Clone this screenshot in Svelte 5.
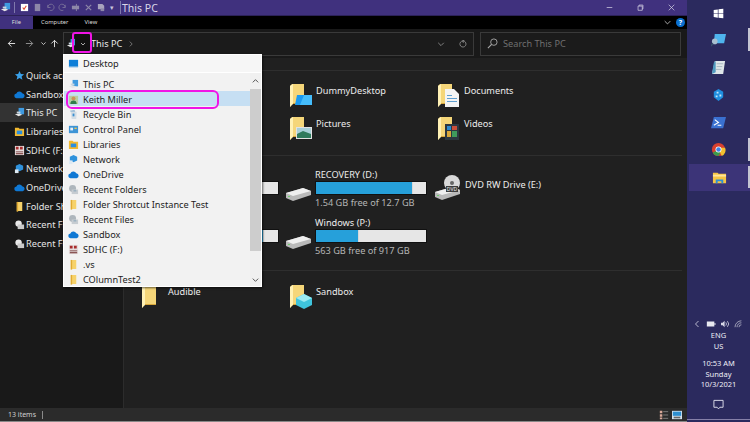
<script>
    const sideItems = [
        { label: "Quick access", icon: "star" },
        { label: "Sandbox", icon: "cloud" },
        { label: "This PC", icon: "pc", active: true },
        { label: "Libraries", icon: "lib" },
        { label: "SDHC (F:)", icon: "sd" },
        { label: "Network", icon: "net" },
        { label: "OneDrive", icon: "cloud" },
        { label: "Folder Shrotcut", icon: "smallfolder" },
        { label: "Recent Files", icon: "recent" },
        { label: "Recent Folders", icon: "recent" }
    ];

    const menuItems = [
        { label: "This PC", icon: "pc" },
        { label: "Keith Miller", icon: "user", active: true },
        { label: "Recycle Bin", icon: "bin" },
        { label: "Control Panel", icon: "panel" },
        { label: "Libraries", icon: "lib" },
        { label: "Network", icon: "net" },
        { label: "OneDrive", icon: "cloud" },
        { label: "Recent Folders", icon: "recentgrey" },
        { label: "Folder Shrotcut Instance Test", icon: "smallfolder" },
        { label: "Recent Files", icon: "recentgrey" },
        { label: "Sandbox", icon: "cloud" },
        { label: "SDHC (F:)", icon: "sd" },
        { label: ".vs", icon: "smallfolder" },
        { label: "COlumnTest2", icon: "smallfolder" }
    ];

    const folders = [
        { label: "Desktop", kind: "desk" },
        { label: "DummyDesktop", kind: "desk" },
        { label: "Documents", kind: "doc" },
        { label: "Downloads", kind: "plain" },
        { label: "Pictures", kind: "pic" },
        { label: "Videos", kind: "video" }
    ];

    const drives = [
        { label: "Local Disk (C:)", used: 56 },
        { label: "RECOVERY (D:)", free: "1.54 GB free of 12.7 GB", used: 88 },
        { label: "DVD RW Drive (E:)", dvd: true },
        { label: "Data (O:)", free: "120 GB free of 931 GB", used: 87 },
        { label: "Windows (P:)", free: "563 GB free of 917 GB", used: 39 }
    ];

    const pinned = [
        { icon: "search", running: true },
        { icon: "note" },
        { icon: "azure" },
        { icon: "shell" },
        { icon: "chrome", running: true },
        { icon: "explorer", running: true, current: true }
    ];
</script>

{#snippet small(name)}
    <svg class="small" viewBox="0 0 12 12">
        {#if name === "star"}
            <path d="M6 1l1.5 3.4 3.5.3-2.7 2.3.9 3.5L6 8.6 2.8 10.500l.9-3.500L1 4.700l3.500-.3z" fill="#3aa0e8" />
        {:else if name === "cloud"}
            <path d="M3 10a2.500 2.500 0 0 1-.4-5A3.500 3.500 0 0 1 9 4.500 2.800 2.800 0 0 1 9.500 10z" fill="#0f78d4" />
        {:else if name === "pc"}
            <path d="M5 1h6v7H5z" fill="#3f9ae0" />
            <path d="M1 8l5-1 3 1.500-4 1.500z" fill="#e6e6e6" />
            <path d="M3 5h4v2H3z" fill="#c9d6e0" />
        {:else if name === "lib"}
            <path d="M1 2h4l1 1h5v8H1z" fill="#f2b92f" />
            <path d="M3 5h6v4H3z" fill="#2b8fe0" />
        {:else if name === "sd"}
            <path d="M1 1h10v10H1z" fill="#e4dcdc" />
            <path d="M2 2h3v3H2zM6.500 2h3v3h-3z" fill="#a82c2c" />
            <path d="M2 7h8v1H2zM2 9h8v1H2z" fill="#6d2a2a" />
        {:else if name === "net"}
            <path d="M6 1l4 2v4L6 9 2 7V3z" fill="#2f92dc" />
            <path d="M1 7h4v4H1z" fill="#dce9f3" />
        {:else if name === "smallfolder"}
            <path d="M3 1h6v10H5l-2 .500z" fill="#f6d26a" />
            <path d="M3 1h1.500v10.500H3z" fill="#e0ab33" />
        {:else if name === "recent"}
            <circle cx="5" cy="5" r="3.500" fill="#e8e8e8" />
            <path d="M4 6h7v5H4z" fill="#c9c9c9" />
        {:else if name === "recentgrey"}
            <circle cx="5" cy="5" r="3.800" fill="#aeb6bc" />
            <path d="M4 6h7v5H4z" fill="#c6ccd1" />
            <path d="M6 7h3v1H6z" fill="#7f9fb5" />
        {:else if name === "user"}
            <path d="M1 2h10v9H1z" fill="#b9cfa0" />
            <circle cx="6" cy="5" r="2.200" fill="#c9965a" />
            <path d="M2.500 11c0-3 1.500-4 3.500-4s3.500 1 3.500 4z" fill="#2f7d4b" />
        {:else if name === "bin"}
            <path d="M3 3h6.500L9 11H4z" fill="#d3dde5" />
            <path d="M2 2l5-1 1 2H3z" fill="#8fb5d3" />
            <path d="M5 5l2 0 0 3-2 0z" fill="#3a8fd0" />
        {:else if name === "panel"}
            <path d="M1 2h10v8H1z" fill="#3d94d6" />
            <path d="M2.500 4h3v3h-3z" fill="#e7f0f6" />
            <path d="M7 4h2.500v1.500H7z" fill="#f1c64e" />
        {:else if name === "desktop"}
            <path d="M1 2h10v8H1z" fill="#0f7fd8" />
            <path d="M1 9h10v1H1z" fill="#7fb7e3" />
        {/if}
    </svg>
{/snippet}

{#snippet folder(kind)}
    <svg class="folder" viewBox="0 0 24 25">
        <path d="M1 3l2-2h12v19H3l-2 4z" fill="#f5d679" />
        <path d="M1 3l3-2v20l-3 3z" fill="#fff1b5" />
        <path d="M4 21h11v-1H4z" fill="#d6a63b" />
        {#if kind === "desk"}
            <path d="M8 12h15v10H6z" fill="#1a9af0" />
            <path d="M15 12h8v10h-12z" fill="#45bdfb" />
        {:else if kind === "doc"}
            <path d="M8 6h9l5 5v13H8z" fill="#f4f4f4" />
            <path d="M10 12h5v1h-5zM10 15h10v1H10zM10 18h10v1H10z" fill="#5f9fd0" />
        {:else if kind === "pic"}
            <path d="M7 11h16v12H7z" fill="#e2e2e2" />
            <path d="M8 12h14v10H8z" fill="#a8d0d8" />
            <path d="M8 18l6-3 8 3v4H8z" fill="#2f7a5c" />
        {:else if kind === "video"}
            <path d="M8 8h14v16H8z" fill="#2c3740" />
            <path d="M10 10h4v4h-4z" fill="#2c8ad0" />
            <path d="M15 10h5v4h-5z" fill="#c84e3a" />
            <path d="M10 15h4v6h-4z" fill="#d9a73a" />
            <path d="M15 15h5v6h-5z" fill="#3f9a5c" />
        {:else if kind === "box"}
            <path d="M15 10l8 4v7l-8 4-8-4v-7z" fill="#3fc4dc" />
            <path d="M15 10l8 4-8 4-8-4z" fill="#9beaf2" />
        {/if}
    </svg>
{/snippet}

{#snippet driveBody()}
    <path d="M0 5l17-5 8 3v4L7 13 0 10z" fill="#b9b9b9" />
    <path d="M0 5l7 3 18-5-8-3z" fill="#efefef" />
    <path d="M2 8h2v1H2z" fill="#6ccf6c" />
{/snippet}

{#snippet driveIcon(dvd)}
    <svg class="drive" class:dvd viewBox="0 0 25 {dvd ? 25 : 13}">
        {#if dvd}
            <circle cx="17" cy="8" r="8" fill="#d9d9d9" />
            <circle cx="17" cy="8" r="2" fill="#666" />
            <g transform="translate(0 12)">
                {@render driveBody()}
            </g>
            <path d="M11 11h12v6H11z" fill="#3c3c3c" />
            <text x="17" y="16" font-size="5" text-anchor="middle" fill="#eee">DVD</text>
        {:else}
            {@render driveBody()}
        {/if}
    </svg>
{/snippet}

{#snippet taskIcon(name)}
    <svg class="task-icon" viewBox="0 0 16 16">
        {#if name === "search"}
            <path d="M4 2h12l-2 10H3z" fill="#4fb4ee" />
            <circle cx="4" cy="10" r="3" fill="#a9bfd0" />
            <path d="M2 12l-2 3" stroke="#37506a" stroke-width="1.500" />
        {:else if name === "note"}
            <path d="M4 1h11l-2 14H1z" fill="#dfe6e9" />
            <path d="M3 3l2-2v12l-4 2z" fill="#4f9ac0" />
            <path d="M6 4h7M6 7h6M5 10h6" stroke="#98aab5" stroke-width="0.800" />
        {:else if name === "azure"}
            <path d="M8 2l5 3v6l-5 4-5-4V5z" fill="#1f8fe0" />
            <path d="M6 5h2v2H6zM9 8h2v2H9zM5 9h2v2H5z" fill="#bfe5fb" />
        {:else if name === "shell"}
            <path d="M3 2h13l-3 12H0z" fill="#3a70d0" />
            <path d="M4 5l4 3-5 3M7 11h4" stroke="#fff" stroke-width="1.100" fill="none" />
        {:else if name === "chrome"}
            <circle cx="8" cy="8" r="7" fill="#d8402f" />
            <path d="M8 8L1.900 11.500A7 7 0 0 0 8 15l3.500-6z" fill="#3a9c4b" />
            <path d="M8 8l3.500 7A7 7 0 0 0 15 6H8z" fill="#f2c02f" />
            <circle cx="8" cy="8" r="3.200" fill="#fff" />
            <circle cx="8" cy="8" r="2.400" fill="#3f83e6" />
        {:else if name === "explorer"}
            <path d="M1 3h5l1 1h8v10H1z" fill="#f5c443" />
            <path d="M1 5h14v2H1z" fill="#ffe59a" />
            <path d="M4 10h8v4h-2v-2H6v2H4z" fill="#2b8fd8" />
        {/if}
    </svg>
{/snippet}

<div class="screen">
    <div class="window">
        <header class="titlebar">
            <div class="quick">
                <span class="tb-pc">{@render small("pc")}</span>
                <span class="sep"></span>
                <svg class="qa" viewBox="0 0 10 10"><path d="M1 1h8v8H1z" fill="#fff" /><path d="M3 5l1.500 2L7 3" stroke="#e0452e" fill="none" stroke-width="1.200" /></svg>
                <svg class="qa" viewBox="0 0 10 10"><path d="M2 1h6v8H2z" fill="#8d87a8" /></svg>
                <svg class="qa" viewBox="0 0 10 10"><path d="M2 5a3.500 3.500 0 1 1 2 3M2 2v3h3" stroke="#78709a" fill="none" /></svg>
                <svg class="qa" viewBox="0 0 10 10"><path d="M8 5a3.500 3.500 0 1 0-2 3M8 2v3H5" stroke="#78709a" fill="none" /></svg>
                <svg class="qa" viewBox="0 0 10 10"><path d="M1 3h8v4H1z" fill="#8d87a8" /><path d="M6 1v8" stroke="#8d87a8" /></svg>
                <svg class="qa" viewBox="0 0 10 10"><path d="M2 2l6 6M8 2L2 8" stroke="#8d87a8" stroke-width="1.300" /></svg>
                <svg class="qa" viewBox="0 0 10 10"><path d="M1 1h5l2 2v4H1z" fill="#a8a3bd" /><path d="M4 6h4v3H4z" fill="#8d87a8" /></svg>
                <span class="tiny-down">▾</span>
                <span class="sep last"></span>
            </div>
            <span class="title">This PC</span>
            <div class="controls">
                <svg viewBox="0 0 10 10"><path d="M1 5h8" stroke="#d8d6e6" /></svg>
                <svg viewBox="0 0 10 10"><path d="M1.500 3h6v6h-6zM3 3V1.500h5.500V7H7.500" stroke="#d8d6e6" fill="none" /></svg>
                <svg viewBox="0 0 10 10"><path d="M1 1l8 8M9 1L1 9" stroke="#d8d6e6" /></svg>
            </div>
        </header>

        <div class="tabs">
            <span class="tab file">File</span>
            <span class="tab">Computer</span>
            <span class="tab">View</span>
            <span class="tabs-right">
                <svg class="collapse" viewBox="0 0 10 6"><path d="M1 1l4 4 4-4" stroke="#eee" fill="none" /></svg>
                <span class="help">?</span>
            </span>
        </div>

        <div class="nav">
            <div class="nav-buttons">
                <svg viewBox="0 0 10 10"><path d="M9 5H1.500M5 1.500L1.500 5 5 8.500" stroke="#eee" fill="none" /></svg>
                <svg viewBox="0 0 10 10"><path d="M1 5h7.500M5 1.500L8.500 5 5 8.500" stroke="#9a9a9a" fill="none" /></svg>
                <svg class="down" viewBox="0 0 10 10"><path d="M2 3.500l3 3 3-3" stroke="#ddd" fill="none" stroke-width="1.200" /></svg>
                <svg viewBox="0 0 10 10"><path d="M5 9V1.500M1.500 5L5 1.500 8.500 5" stroke="#eee" fill="none" /></svg>
            </div>
            <div class="address">
                <span class="addr-pc">{@render small("pc")}</span>
                <span class="addr-drop">
                    <svg viewBox="0 0 10 10"><path d="M3 4l2 2 2-2" stroke="#aaa" fill="none" /></svg>
                </span>
                <span class="crumb">This PC</span>
                <svg class="crumb-arrow" viewBox="0 0 10 10"><path d="M3.500 2l3 3-3 3" stroke="#888" fill="none" /></svg>
                <span class="addr-end">
                    <svg viewBox="0 0 10 10"><path d="M1.500 3.500L5 7l3.500-3.500" stroke="#999" fill="none" /></svg>
                    <svg viewBox="0 0 10 10"><path d="M7.500 2.200A3.800 3.800 0 1 1 5 1.200M5 0v3l2-1.500z" stroke="#999" fill="none" /></svg>
                </span>
            </div>
            <div class="search">
                <svg viewBox="0 0 12 12"><circle cx="7.500" cy="4.500" r="3.500" stroke="#aaa" fill="none" /><path d="M5 7l-4 4" stroke="#aaa" stroke-width="1.200" /></svg>
                <span>Search This PC</span>
            </div>
        </div>

        <div class="main">
            <aside class="sidebar">
                {#each sideItems as item}
                    <div class="side-item" class:active={item.active}>
                        {@render small(item.icon)}
                        <span>{item.label}</span>
                    </div>
                {/each}
            </aside>

            <section class="content">
                <div class="group-head"></div>
                <div class="grid folders">
                    {#each folders as f}
                        <div class="item">
                            {@render folder(f.kind)}
                            <span class="label">{f.label}</span>
                        </div>
                    {/each}
                </div>

                <div class="group-head"></div>
                <div class="grid drives">
                    {#each drives as d}
                        <div class="drive-item" class:single={d.dvd}>
                            {@render driveIcon(d.dvd)}
                            <div class="drive-text">
                                <span class="label">{d.label}</span>
                                {#if !d.dvd}
                                    <div class="bar"><div class="fill" style="width: {d.used}%"></div></div>
                                {/if}
                                {#if d.free}
                                    <span class="free">{d.free}</span>
                                {/if}
                            </div>
                        </div>
                    {/each}
                </div>

                <div class="group-head"></div>
                <div class="grid last">
                    <div class="item">
                        {@render folder("plain")}
                        <span class="label">Audible</span>
                    </div>
                    <div class="item">
                        {@render folder("box")}
                        <span class="label">Sandbox</span>
                    </div>
                </div>
            </section>
        </div>

        <footer class="status">
            <span>13 items</span>
            <span class="status-sep"></span>
            <span class="views">
                <svg viewBox="0 0 12 12"><path d="M1 1h3v3H1zM1 5h3v3H1zM1 9h3v2H1z" fill="#d9a99a" /><path d="M5 2h6M5 6h6M5 10h6" stroke="#888" /></svg>
                <svg class="view-on" viewBox="0 0 12 12"><path d="M0 1h12v10H0z" fill="#d5e5f0" /><path d="M1 2h10v5H1z" fill="#2d8fd0" /><path d="M2 8h8v2H2z" fill="#666" /></svg>
            </span>
        </footer>

        <div class="menu">
            <div class="menu-top">
                {@render small("desktop")}
                <span>Desktop</span>
            </div>
            <div class="menu-body">
                <ul>
                    {#each menuItems as item}
                        <li class:active={item.active}>
                            {@render small(item.icon)}
                            <span>{item.label}</span>
                        </li>
                    {/each}
                </ul>
                <div class="scroll">
                    <svg class="scroll-up" viewBox="0 0 10 10"><path d="M2 6.500l3-3 3 3" stroke="#444" fill="none" /></svg>
                    <div class="thumb"></div>
                    <svg viewBox="0 0 10 10"><path d="M2 3.500l3 3 3-3" stroke="#444" fill="none" /></svg>
                </div>
            </div>
        </div>

        <div class="mark mark-drop"></div>
        <div class="mark mark-row"></div>
    </div>

    <aside class="taskbar">
        <button class="task start" aria-label="Start">
            <svg class="win-logo" viewBox="0 0 16 16"><path d="M1 3l6-1v5.500H1zM8 1.800L15 1v6.500H8zM1 8.500h6V14l-6-1zM8 8.500h7V15l-7-1z" fill="#fff" /></svg>
        </button>
        {#each pinned as p}
            <button class="task" class:running={p.running} class:current={p.current} aria-label={p.icon}>
                {@render taskIcon(p.icon)}
            </button>
        {/each}

        <div class="tray">
            <div class="tray-icons">
                <svg viewBox="0 0 8 10" class="chev"><path d="M6 1L2 5l4 4" stroke="#e4e4f0" fill="none" /></svg>
                <svg viewBox="0 0 12 8" class="tray-i"><path d="M1 1h9v6H1z" fill="#e8e8f0" /><path d="M10 3h1.500v2H10z" fill="#e8e8f0" /></svg>
                <svg viewBox="0 0 12 10" class="tray-i"><path d="M1 3.500h2L5.500 1v8L3 6.500H1z" fill="#d8d8e6" /><path d="M7 3a3 3 0 0 1 0 4M9 1.500a5 5 0 0 1 0 7" stroke="#d8d8e6" fill="none" /></svg>
                <svg viewBox="0 0 12 10" class="tray-i"><path d="M1 9a8 8 0 0 1 8-8M3.500 9A5.500 5.500 0 0 1 9 3.500M6 9a3 3 0 0 1 3-3" stroke="#b9b9cc" fill="none" /></svg>
            </div>
            <div class="tray-text lang">ENG<br />US</div>
            <div class="tray-text clock">10:53 AM<br />Sunday<br />10/3/2021</div>
            <svg class="notify" viewBox="0 0 12 12"><path d="M1 1.500h10v7.500H7.500L6 10.800 4.500 9H1z" stroke="#e4e4f0" fill="none" /></svg>
        </div>
    </aside>
</div>

<style>
    :global(body) {
        margin: 0;
        background: #202020;
    }
    * {
        box-sizing: border-box;
    }
    svg {
        display: block;
        flex: none;
    }
    .screen {
        display: flex;
        width: 750px;
        height: 422px;
        overflow: hidden;
        font-family: "Noto Sans", sans-serif;
        font-size: 9.2px;
        color: #e8e8e8;
    }
    .window {
        position: relative;
        display: flex;
        flex-direction: column;
        width: 687px;
        height: 422px;
        background: #202020;
    }

    .titlebar {
        display: flex;
        align-items: center;
        height: 16px;
        flex: none;
        background: #40317e;
        border-bottom: 1px solid #2c2258;
    }
    .quick {
        display: flex;
        align-items: center;
        gap: 3px;
        width: 122px;
        flex: none;
    }
    .sep {
        width: 1px;
        height: 11px;
        background: #8079ac;
        margin: 0 2px 0 0;
    }
    .sep.last {
        margin: 0 0 0 3px;
    }
    .qa {
        width: 9px;
        height: 9px;
        margin-right: 0.750px;
    }
    .tiny-down {
        font-size: 7px;
        color: #c8c4dc;
        margin-left: 1px;
    }
    .title {
        font-size: 10.5px;
        color: #d9d6e8;
    }
    .controls {
        margin-left: auto;
        display: flex;
        gap: 24px;
        padding-right: 12px;
    }
    .controls svg {
        width: 7px;
        height: 7px;
    }

    .tabs {
        display: flex;
        align-items: center;
        height: 13px;
        flex: none;
        background: #000;
        font-size: 5.8px;
        color: #dcdcdc;
    }
    .tab {
        padding: 0 8px;
        line-height: 13px;
    }
    .tab.file {
        width: 33px;
        padding: 0;
        text-align: center;
        background: #40317e;
    }
    .tabs-right {
        margin-left: auto;
        display: flex;
        align-items: center;
        gap: 5px;
        padding-right: 2px;
    }
    .collapse {
        width: 7px;
        height: 5px;
    }
    .help {
        width: 9px;
        height: 9px;
        border-radius: 50%;
        background: #0a6fd0;
        color: #fff;
        font-size: 7px;
        font-weight: 700;
        line-height: 9px;
        text-align: center;
    }

    .nav {
        display: flex;
        align-items: center;
        height: 29px;
        flex: none;
        background: #191919;
    }
    .nav-buttons {
        display: flex;
        align-items: center;
        width: 63px;
        padding-left: 7px;
        flex: none;
    }
    .nav-buttons svg {
        width: 9px;
        height: 9px;
        margin-right: 9px;
    }
    .nav-buttons svg.down {
        margin-right: 3px;
        width: 7px;
        margin-left: -3px;
    }
    .address {
        display: flex;
        align-items: center;
        width: 411px;
        height: 24px;
        border: 1px solid #3a3a3a;
        background: #1b1b1b;
        flex: none;
    }
    .addr-pc {
        margin-left: 2px;
        width: 9px;
    }
    .addr-drop {
        display: flex;
        align-items: center;
        justify-content: center;
        width: 16px;
        height: 19px;
        background: #111;
    }
    .addr-drop svg {
        width: 10px;
        height: 10px;
    }
    .crumb {
        color: #eaeaea;
    }
    .crumb-arrow {
        width: 8px;
        height: 8px;
        margin-left: 5px;
    }
    .addr-end {
        margin-left: auto;
        display: flex;
        gap: 14px;
        padding-right: 6px;
    }
    .addr-end svg {
        width: 8px;
        height: 8px;
    }
    .search {
        display: flex;
        align-items: center;
        gap: 5px;
        width: 201px;
        height: 24px;
        margin-left: 6px;
        padding-left: 6px;
        border: 1px solid #3a3a3a;
        background: #1b1b1b;
        color: #6f6f6f;
    }
    .search svg {
        width: 11px;
        height: 11px;
    }

    .main {
        display: flex;
        flex: 1;
        min-height: 0;
    }
    .sidebar {
        width: 124px;
        flex: none;
        padding-top: 8px;
        background: #191919;
        border-right: 1px solid #2c2c2c;
        overflow: hidden;
    }
    .side-item {
        display: flex;
        align-items: center;
        gap: 1px;
        height: 18.700px;
        padding-left: 14px;
        white-space: nowrap;
        color: #e4e4e4;
    }
    .side-item span {
        width: 37px;
        overflow: hidden;
    }
    .side-item.active {
        background: #333;
    }
    .small {
        width: 11px;
        height: 11px;
    }

    .content {
        flex: 1;
        padding-top: 3px;
        overflow: hidden;
    }
    .group-head {
        height: 10px;
        margin-right: 5px;
        border-bottom: 1px solid #2e2e2e;
    }
    .grid {
        display: grid;
        grid-template-columns: repeat(3, 148px);
        padding-left: 17px;
    }
    .folders {
        padding-top: 12px;
        padding-bottom: 5px;
        grid-auto-rows: 25px;
        row-gap: 8px;
    }
    .drives {
        padding-top: 12px;
        grid-auto-rows: 45px;
        row-gap: 3px;
    }
    .last {
        padding-top: 13px;
    }
    .item {
        display: flex;
        gap: 3px;
        height: 25px;
    }
    .item .label {
        margin-top: 2px;
    }
    .folder {
        width: 24px;
        height: 25px;
    }
    .label {
        display: block;
        line-height: 12px;
        margin-top: 1px;
        white-space: nowrap;
        color: #ececec;
    }
    .drive-item {
        display: flex;
        gap: 4px;
        margin-left: -3px;
    }
    .drive-item.single {
        margin-left: -2px;
        gap: 5px;
    }
    .drive {
        width: 25px;
        height: 13px;
        margin-top: 20px;
    }
    .drive.dvd {
        height: 25px;
        margin-top: 7px;
    }
    .drive-text {
        display: flex;
        flex-direction: column;
    }
    .drive-item.single .label {
        margin-top: 11px;
    }
    .bar {
        width: 112px;
        height: 14px;
        border: 1px solid #111;
        background: #e6e6e6;
    }
    .fill {
        height: 100%;
        background: #26a0da;
        border-right: 1px solid #d8d8d8;
    }
    .free {
        margin-top: 2px;
        line-height: 12px;
        white-space: nowrap;
        color: #b5b5b5;
    }

    .status {
        display: flex;
        align-items: center;
        gap: 6px;
        height: 14px;
        flex: none;
        padding: 0 1px 0 8px;
        background: #2b2b2b;
        border-bottom: 1px solid #888;
        font-size: 7px;
        color: #cfcfcf;
    }
    .status-sep {
        width: 1px;
        height: 8px;
        background: #8a8a8a;
    }
    .views {
        margin-left: auto;
        display: flex;
        gap: 3px;
        padding-right: 4px;
    }
    .views svg {
        width: 10px;
        height: 10px;
    }

    /* dropdown hangs over the window */
    .menu {
        position: absolute;
        left: 63px;
        top: 54px;
        width: 199px;
        height: 233px;
        background: #f2f2f2;
        border: 1px solid #fff;
        box-shadow: 1px 1px 2px rgba(0, 0, 0, 0.6);
        color: #222;
    }
    .menu-top {
        display: flex;
        align-items: center;
        gap: 4px;
        height: 17px;
        padding-left: 4px;
        background: #f6f6f6;
    }
    .menu-body {
        display: flex;
        height: 214px;
        padding-top: 3px;
        border-top: 1px solid #fff;
    }
    ul {
        flex: 1;
        margin: 0;
        padding: 0;
        list-style: none;
    }
    li {
        display: flex;
        align-items: center;
        gap: 4px;
        height: 15px;
        padding-top: 2px;
        padding-left: 4px;
        white-space: nowrap;
    }
    li.active {
        background: #c6dff3;
    }
    .scroll {
        display: flex;
        flex-direction: column;
        align-items: center;
        width: 11px;
        margin-top: -3px;
        background: #f0f0f0;
    }
    .scroll svg {
        width: 9px;
        height: 12px;
    }
    .scroll svg.scroll-up {
        height: 16px;
    }
    .thumb {
        flex: 1;
        width: 100%;
        margin-bottom: 23px;
        background: #cdcdcd;
    }

    .mark {
        position: absolute;
        border: 2px solid #f014e6;
    }
    .mark-drop {
        left: 72px;
        top: 32px;
        width: 20px;
        height: 21px;
        border-radius: 3px;
    }
    .mark-row {
        left: 66px;
        top: 90px;
        width: 153px;
        height: 19px;
        border-radius: 6px;
    }

    .taskbar {
        display: flex;
        flex-direction: column;
        width: 63px;
        flex: none;
        background: #2b2a5e;
    }
    .task {
        display: flex;
        align-items: center;
        justify-content: center;
        width: 100%;
        height: 27.500px;
        padding: 0;
        border: none;
        background: none;
        position: relative;
    }
    .task.start {
        height: 26px;
    }
    .task.running::after {
        content: "";
        position: absolute;
        right: 0;
        top: 2px;
        bottom: 3px;
        width: 2px;
        background: #c4c4d2;
    }
    .task.current {
        background: #3c3478;
        margin-left: 2px;
        width: 61px;
    }
    .task-icon {
        width: 15px;
        height: 15px;
        margin-right: 1px;
    }
    .win-logo {
        width: 11px;
        height: 11px;
    }
    .tray {
        margin-top: auto;
        margin-bottom: 2px;
        display: flex;
        flex-direction: column;
        align-items: center;
        height: 100px;
        border-bottom: 1px solid #8580a8;
        padding-bottom: 9px;
    }
    .tray-icons {
        display: flex;
        align-items: center;
        gap: 4px;
    }
    .chev {
        width: 6px;
        height: 8px;
        margin-right: 2px;
    }
    .tray-i {
        width: 10px;
        height: 8px;
    }
    .tray-text {
        text-align: center;
        font-size: 7.500px;
        line-height: 10.500px;
        color: #eeeef6;
    }
    .lang {
        margin-top: 2px;
    }
    .clock {
        margin-top: 7px;
    }
    .notify {
        width: 11px;
        height: 11px;
        margin-top: auto;
    }
</style>
